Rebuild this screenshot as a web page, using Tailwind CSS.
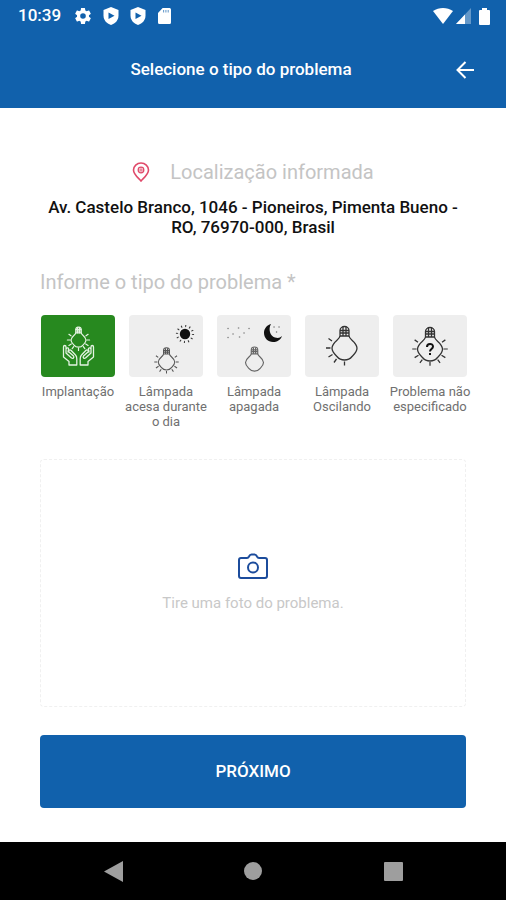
<!DOCTYPE html>
<html lang="pt-BR">
<head>
<meta charset="utf-8">
<meta name="viewport" content="width=device-width, initial-scale=1">
<title>Selecione o tipo do problema</title>
<script src="https://cdn.jsdelivr.net/npm/@tailwindcss/browser@4"></script>
</head>
<body class="flex min-h-screen flex-col bg-white font-[Roboto,sans-serif]">
<svg class="hidden" aria-hidden="true">
  <defs>
    <g id="bulb" fill="none" stroke-linejoin="round">
      <path d="M-4.500-12C-5-8-12-6.500-12.500 0C-12.500 4-10 6-7.500 8.500C-5.500 11-3 12 0 12C3 12 5.500 11 7.500 8.500C10 6 12.500 4 12.500 0C12-6.500 5-8 4.500-12"/>
      <path d="M-4.500-12v-5.500a4.500 4 0 0 1 9 0v5.500z"/>
      <path d="M-4.500-17.500h9M-4.500-15h9M-1.500-21v9M1.500-21v9"/>
    </g>
    <g id="rays-left"><path d="M-14 0h-4.500M-12.500-7l-3.500-2.500M-12 6.500l-4 2.500M-8 11l-2.500 3.500M0 13.500v4"/></g>
    <g id="rays-right"><path d="M14 0h4.500M12.500-7l3.500-2.500M12 6.500l4 2.500M8 11l2.500 3.500"/></g>
  </defs>
</svg>

<header class="bg-[#1161ac] text-white">
  <div class="flex h-8 items-center justify-between pl-[18px] pr-4">
    <div class="flex items-center gap-3">
      <span class="text-[17px] font-medium">10:39</span>
      <svg class="ml-[2px] size-4" viewBox="2 2 20 20" fill="currentColor" aria-hidden="true"><path d="M19.430 12.980c.04-.32.07-.64.07-.98s-.03-.66-.07-.98l2.110-1.650c.19-.15.24-.42.12-.64l-2-3.460c-.12-.22-.39-.3-.61-.22l-2.490 1c-.52-.4-1.080-.73-1.690-.98l-.38-2.650A.49.49 0 0 0 14 2h-4c-.25 0-.46.18-.49.42l-.38 2.650c-.61.25-1.170.59-1.690.98l-2.490-1c-.23-.09-.49 0-.61.22l-2 3.460c-.13.22-.07.49.12.64l2.110 1.650c-.04.32-.07.65-.07.98s.03.66.07.98l-2.110 1.650c-.19.15-.24.42-.12.64l2 3.460c.12.22.39.3.61.22l2.490-1c.52.4 1.080.73 1.690.98l.38 2.650c.03.24.24.42.49.42h4c.25 0 .46-.18.49-.42l.38-2.650c.61-.25 1.170-.59 1.690-.98l2.490 1c.23.09.49 0 .61-.22l2-3.460c.12-.22.07-.49-.12-.64zM12 15.500a3.500 3.500 0 1 1 0-7 3.500 3.500 0 0 1 0 7z"/></svg>
      <svg class="h-[18px] w-4" viewBox="0 0 16 18" aria-hidden="true"><path fill="currentColor" d="M8 0l7.500 3v5.500c0 4.500-3 8-7.500 9.500C3.500 16.500.5 13 .5 8.500V3z"/><path fill="#1161ac" d="M5.500 5.500l6 3.200-6 3.300z"/></svg>
      <svg class="-ml-px h-[18px] w-4" viewBox="0 0 16 18" aria-hidden="true"><path fill="currentColor" d="M8 0l7.500 3v5.500c0 4.500-3 8-7.500 9.500C3.500 16.500.5 13 .5 8.500V3z"/><path fill="#1161ac" d="M5.500 5.500l6 3.200-6 3.300z"/></svg>
      <svg class="h-4 w-[13px]" viewBox="0 0 14 16" preserveAspectRatio="none" aria-hidden="true"><path fill="currentColor" d="M5 0h7.500A1.500 1.500 0 0 1 14 1.500v13a1.500 1.500 0 0 1-1.500 1.500h-11A1.500 1.500 0 0 1 0 14.500V5z"/><path stroke="#1161ac" stroke-width="1.200" stroke-opacity=".6" d="M6 2v2.500M8.500 2v2.500M11 2v2.500"/></svg>
    </div>
    <div class="flex items-center gap-[3px]">
      <svg class="h-4 w-5" viewBox="0 0 20 16" fill="currentColor" aria-hidden="true"><path d="M0 3C6-1 14-1 20 3L10 16z"/></svg>
      <svg class="size-4" viewBox="0 0 16 16" fill="currentColor" aria-hidden="true"><path fill-opacity=".35" d="M15 0v16H0z"/><path d="M9 6.400V16H0z"/></svg>
      <svg class="ml-1 h-[17px] w-[11px]" viewBox="0 0 11 17" fill="currentColor" aria-hidden="true"><path d="M3 0h5v2h2a1 1 0 0 1 1 1v13a1 1 0 0 1-1 1H1a1 1 0 0 1-1-1V3a1 1 0 0 1 1-1h2z"/></svg>
    </div>
  </div>
  <div class="flex h-[76px] items-center pl-[26px] pr-8">
    <h1 class="flex-1 text-center text-[17px] font-medium">Selecione o tipo do problema</h1>
    <button type="button" aria-label="Voltar"><svg class="size-[18px]" viewBox="0 0 18 18" fill="none" stroke="currentColor" stroke-width="2" aria-hidden="true"><path d="M18 9H2M9.500 1L1.500 9l8 8"/></svg></button>
  </div>
</header>

<main class="flex-1 px-10 pt-[52px] pb-[33px]">
  <h2 class="flex h-6 items-center justify-center gap-5 text-xl text-[#c4c4c4]">
    <svg class="h-5 w-[18px]" viewBox="0 0 18 20" fill="none" stroke="#e04a6a" stroke-width="1.600" aria-hidden="true"><path d="M9 19C6.500 16 1.500 12.500 1.500 8a7.500 7 0 0 1 15 0c0 4.500-5 8-7.500 11z"/><circle cx="9" cy="8" r="2.800" stroke-width="1.300"/><path d="M9 6v4M7 8h4" stroke-width=".8"/></svg>
    Localização informada
  </h2>
  <p class="mt-[13px] text-center text-[17px] font-medium leading-5 text-[#111]">Av. Castelo Branco, 1046 - Pioneiros, Pimenta Bueno - RO, 76970-000, Brasil</p>

  <fieldset class="mt-[33px]">
    <legend class="text-xl leading-6 text-[#c4c4c4]">Informe o tipo do problema *</legend>
    <div class="-ml-[6px] -mr-2 mt-[21px] grid h-[123px] grid-cols-5 items-start text-center text-[13px] leading-[15px] text-[#707070]">
      <label class="flex flex-col items-center gap-[7px]">
        <input type="radio" name="tipo" checked class="sr-only">
        <svg class="h-[62px] w-[74px] rounded bg-[#27891f]" viewBox="0 0 74 62" fill="none" stroke="#e4f3e2" stroke-linecap="round" stroke-linejoin="round" aria-hidden="true">
          <g transform="translate(37.500 25) scale(.6)" stroke-width="2"><use href="#bulb"/><use href="#rays-left"/><use href="#rays-right"/></g>
          <path stroke-width="1.300" d="M35 50h-7v-3.500L22.500 42V32c0-2 2.500-2 2.500 0v6l5.500 5c1.500 1 3-.5 2-2L28 37c-1-1.500.8-2.800 2.200-1.500L34.500 40c1 1 1.300 2 1.300 4v6zM40 50h7v-3.500l5.500-4.500V32c0-2-2.500-2-2.500 0v6l-5.500 5c-1.500 1-3-.5-2-2l4.500-4c1-1.500-.8-2.800-2.200-1.500L40.500 40c-1 1-1.300 2-1.300 4v6zM25 34c1-2 3-1 2.500.5L27 37M50 34c-1-2-3-1-2.500.5L48 37"/>
        </svg>
        <span>Implantação</span>
      </label>
      <label class="flex flex-col items-center gap-[7px]">
        <input type="radio" name="tipo" class="sr-only">
        <svg class="h-[62px] w-[74px] rounded bg-[#eeeeee]" viewBox="0 0 74 62" fill="none" stroke="#555" aria-hidden="true">
          <circle cx="56" cy="19" r="5.200" fill="#111" stroke="none"/>
          <circle cx="56" cy="19" r="8" stroke="#333" stroke-width="2.200" stroke-dasharray="1 3.188"/>
          <g transform="translate(37.500 47) scale(.66)" stroke-width="1.600"><use href="#bulb"/><use href="#rays-left"/><use href="#rays-right"/></g>
        </svg>
        <span>Lâmpada<br>acesa durante<br>o dia</span>
      </label>
      <label class="flex flex-col items-center gap-[7px]">
        <input type="radio" name="tipo" class="sr-only">
        <svg class="h-[62px] w-[74px] rounded bg-[#eeeeee]" viewBox="0 0 74 62" fill="none" stroke="#666" aria-hidden="true">
          <path fill="#111" stroke="none" d="M54 9c-3 5-1 12 4 13.500 3 1 5 .5 7-1.500-1.500 4-5 6-9 6-5 0-9-4-9-9 0-4.500 3-8 7-9z"/>
          <path stroke-width="1.600" stroke-linecap="round" d="M11 13.500h.1M21.500 13h.1M32 13.500h.1M16 19h.1M27 18h.1M11 22.500h.1M22.500 22h.1" stroke="#888"/>
          <path stroke-width="1.400" stroke-linecap="round" d="M57 12h.1M62 12h.1M59.500 17h.1" stroke="#777"/>
          <g transform="translate(37.500 47.500) scale(.72)" stroke-width="1.600"><use href="#bulb"/></g>
        </svg>
        <span>Lâmpada<br>apagada</span>
      </label>
      <label class="flex flex-col items-center gap-[7px]">
        <input type="radio" name="tipo" class="sr-only">
        <svg class="h-[62px] w-[74px] rounded bg-[#eeeeee]" viewBox="0 0 74 62" fill="none" stroke="#333" stroke-width="1.300" aria-hidden="true">
          <g transform="translate(39.500 33)"><use href="#bulb"/><use href="#rays-left"/></g>
        </svg>
        <span>Lâmpada<br>Oscilando</span>
      </label>
      <label class="flex flex-col items-center gap-[7px]">
        <input type="radio" name="tipo" class="sr-only">
        <svg class="h-[62px] w-[74px] rounded bg-[#eeeeee]" viewBox="0 0 74 62" fill="none" stroke="#333" stroke-width="1.300" aria-hidden="true">
          <g transform="translate(37 34)"><use href="#bulb"/><use href="#rays-left" transform="scale(.96)"/><use href="#rays-right" transform="scale(.96)"/><path stroke="#111" stroke-width="2" d="M-3-2c0-4 6-4 6-.5C3 0 0 0 0 2.500M0 4v2"/></g>
        </svg>
        <span>Problema não<br>especificado</span>
      </label>
    </div>
  </fieldset>

  <button type="button" class="mt-[21px] flex h-[248px] w-full flex-col items-center justify-center gap-[14px] rounded-sm border border-dashed border-[#f0f0f0] text-[15px] leading-5 text-[#c8c8c8]">
    <svg class="h-[26px] w-[30px]" viewBox="0 0 30 26" fill="none" stroke="#1c4c9c" stroke-width="2" stroke-linejoin="round" aria-hidden="true"><path d="M3 5h6c1 0 1.500-.5 2-1.500C11.700 2 12.200 1.500 13.500 1.500h3c1.300 0 1.800.5 2.500 2 .5 1 1 1.500 2 1.500h6a2 2 0 0 1 2 2v16a2 2 0 0 1-2 2H3a2 2 0 0 1-2-2V7a2 2 0 0 1 2-2z"/><circle cx="15" cy="14.500" r="5"/></svg>
    Tire uma foto do problema.
  </button>

  <button type="button" class="mt-7 h-[73px] w-full rounded bg-[#1161ac] text-[17px] font-medium text-white">PRÓXIMO</button>
</main>

<nav class="grid h-[58px] grid-cols-3 items-center bg-black px-[43px]" aria-label="Sistema">
  <button type="button" aria-label="Voltar" class="justify-self-center"><svg class="h-[21px] w-[19px]" viewBox="0 0 19 21" fill="#9e9e9e" aria-hidden="true"><path d="M19 0v21L0 10.500z"/></svg></button>
  <button type="button" aria-label="Início" class="size-[18px] justify-self-center rounded-full bg-[#9e9e9e]"></button>
  <button type="button" aria-label="Recentes" class="size-[19px] justify-self-center rounded-[1px] bg-[#9e9e9e]"></button>
</nav>
</body>
</html>
